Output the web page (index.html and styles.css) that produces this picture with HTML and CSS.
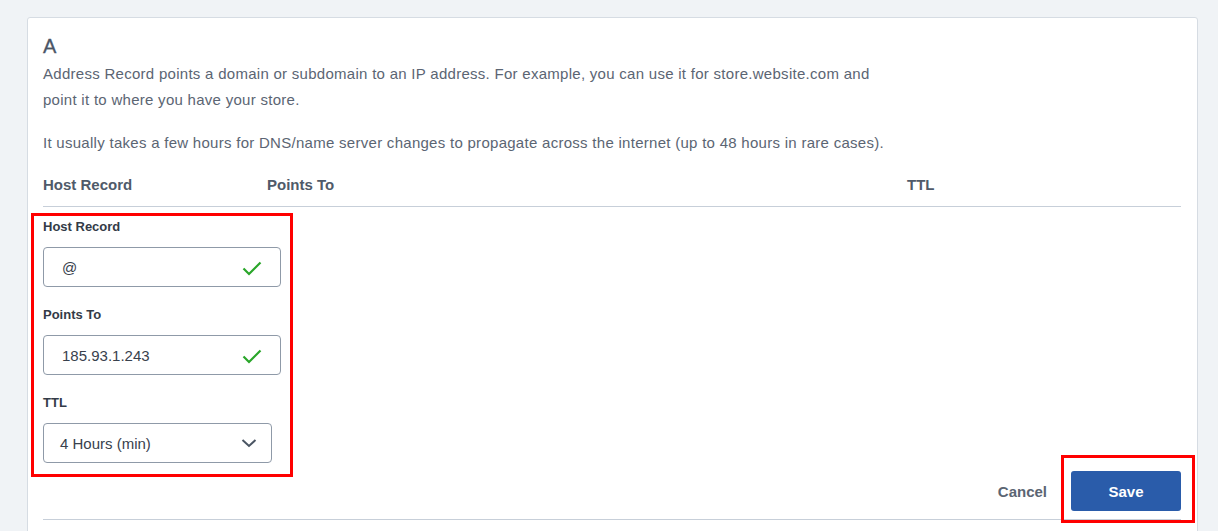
FILE: index.html
```html
<!DOCTYPE html>
<html lang="en">
<head>
<meta charset="utf-8">
<title>A Record</title>
<link rel="stylesheet" href="styles.css">
</head>
<body>
<div class="card">
  <h2 class="title">A</h2>
  <p class="desc">Address Record points a domain or subdomain to an IP address. For example, you can use it for store.website.com and<br>point it to where you have your store.</p>
  <p class="desc note">It usually takes a few hours for DNS/name server changes to propagate across the internet (up to 48 hours in rare cases).</p>
  <div class="head-row">
    <span>Host Record</span>
    <span>Points To</span>
    <span>TTL</span>
  </div>
  <div class="form">
    <label class="lbl">Host Record</label>
    <div class="field">
      <span class="val">@</span>
      <svg class="check" width="20" height="16" viewBox="0 0 20 16"><path d="M1.5 8.5 L7 14 L18.5 2.5" fill="none" stroke="#2aa62a" stroke-width="2.2"/></svg>
    </div>
    <label class="lbl">Points To</label>
    <div class="field">
      <span class="val">185.93.1.243</span>
      <svg class="check" width="20" height="16" viewBox="0 0 20 16"><path d="M1.5 8.5 L7 14 L18.5 2.5" fill="none" stroke="#2aa62a" stroke-width="2.2"/></svg>
    </div>
    <label class="lbl">TTL</label>
    <div class="field select">
      <span class="val sel">4 Hours (min)</span>
      <svg class="chev" width="16" height="10" viewBox="0 0 16 10"><path d="M1.5 2 L8 8 L14.5 2" fill="none" stroke="#4a5563" stroke-width="2"/></svg>
    </div>
  </div>
  <div class="actions">
    <button class="cancel">Cancel</button>
    <button class="save">Save</button>
  </div>
  <div class="mark mark-form"></div>
  <div class="mark mark-save"></div>
</div>
</body>
</html>
```
FILE: styles.css
```css
* { box-sizing: border-box; }
html, body { margin: 0; padding: 0; }
body {
  background: #f0f3f6;
  font-family: "Liberation Sans", Arial, sans-serif;
  color: #5b6573;
  height: 531px;
  overflow: hidden;
}
.card {
  position: relative;
  margin: 17px 0 0 27px;
  width: 1171px;
  min-height: 600px;
  background: #fff;
  border: 1px solid #d6dce3;
  border-radius: 3px;
  padding: 16px 16px 0 15px;
}
.title {
  margin: 0;
  font-size: 20px;
  line-height: 24px;
  font-weight: normal;
  color: #4b5667;
  -webkit-text-stroke: 0.3px #4b5667;
}
.desc {
  margin: 3px 0 0;
  font-size: 15px;
  line-height: 26px;
  letter-spacing: 0.28px;
}
.note { margin-top: 17px; }
.head-row {
  display: grid;
  grid-template-columns: 224px 640px 1fr;
  margin-top: 19px;
  padding-bottom: 11px;
  border-bottom: 1px solid #c7cfd9;
  font-size: 15px;
  line-height: 20px;
  font-weight: bold;
  color: #4f5a69;
}
.form {
  display: flex;
  flex-direction: column;
  width: 238px;
  padding-top: 11px;
}
.lbl {
  font-size: 13px;
  line-height: 18px;
  font-weight: bold;
  color: #333b47;
  margin-bottom: 11px;
}
.field {
  display: flex;
  align-items: center;
  justify-content: space-between;
  height: 40px;
  border: 1px solid #8f9aa8;
  border-radius: 4px;
  padding: 0 18px 0 18px;
  margin-bottom: 19px;
}
.val {
  font-size: 15px;
  color: #38414d;
}
.check { margin-top: 2px; }
.select {
  width: 229px;
  padding: 0 14px 0 16px;
  margin-bottom: 0;
}
.actions {
  display: flex;
  justify-content: flex-end;
  align-items: center;
  gap: 24px;
  margin-top: 8px;
  padding-bottom: 8px;
  border-bottom: 1px solid #c7cfd9;
}
button {
  font-family: inherit;
  font-size: 15px;
  font-weight: bold;
  border: none;
  cursor: pointer;
}
.cancel {
  background: none;
  color: #5b6573;
  padding: 0;
}
.save {
  width: 110px;
  height: 40px;
  background: #2a5caa;
  color: #fff;
  border-radius: 3px;
}
.mark {
  position: absolute;
  border: 3px solid #ff0000;
  pointer-events: none;
}
.mark-form { left: 3px; top: 195px; width: 262px; height: 264px; }
.mark-save { left: 1033px; top: 437px; width: 134px; height: 68px; }
```
